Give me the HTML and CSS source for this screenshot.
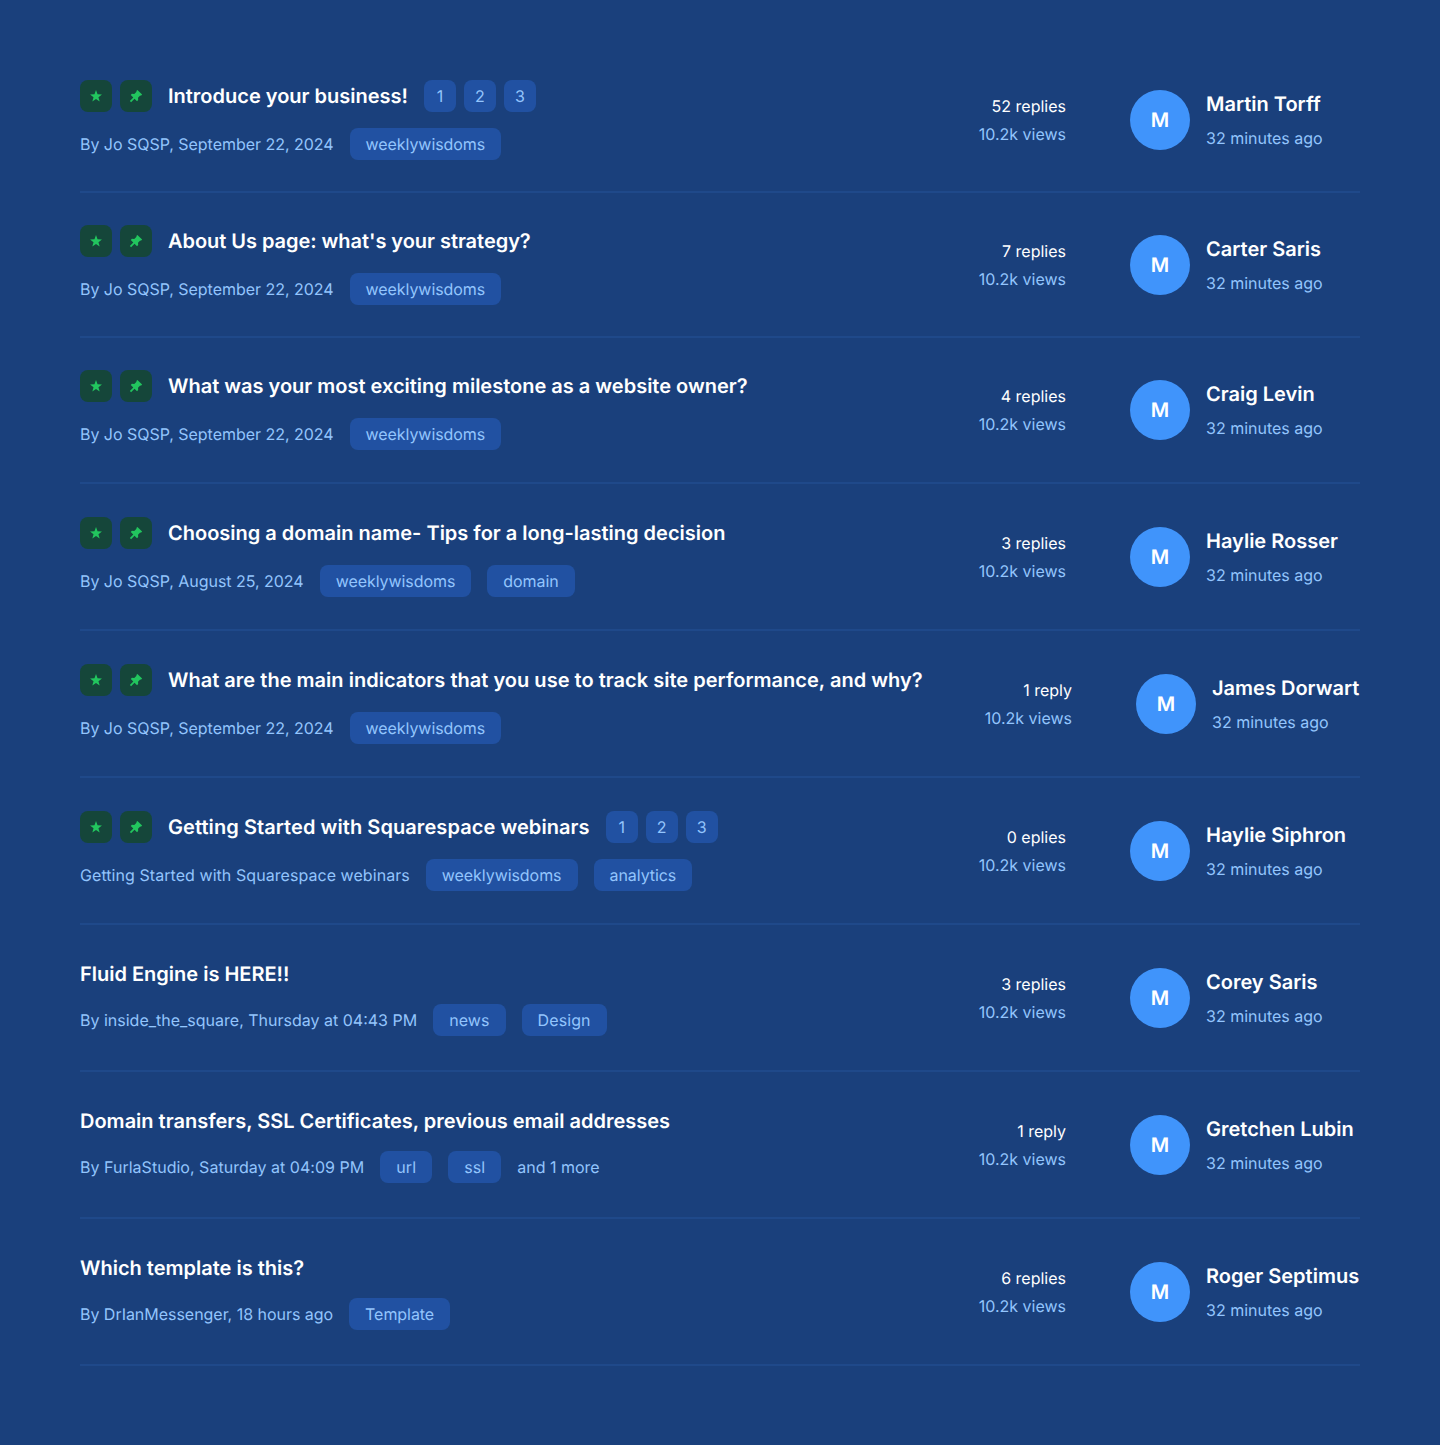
FILE: index.html
```html
<!DOCTYPE html>
<html lang="en">
<head>
<meta charset="utf-8">
<title>Forum topics</title>
<link rel="stylesheet" href="styles.css">
</head>
<body>
<svg class="sprite" aria-hidden="true">
  <symbol id="star" viewBox="0 0 16 16"><path d="M8 1.2l1.75 4.8 5.05.2-4 3.1 1.4 4.9L8 11.4l-4.2 2.8 1.4-4.9-4-3.1 5.05-.2z"/></symbol>
  <symbol id="pin" viewBox="0 0 16 16"><path d="M9.6 1l5.4 5.4-1.4 1.2-.8-.2-2.5 2.6.2 2.7-1.3 1.3-2.9-2.9L2.4 15 1 13.600l3.900-3.900L2 6.800l1.300-1.300 2.700.2 2.600-2.500-.2-.8z"/></symbol>
</svg>
<main class="topics" id="topics"></main>
<script src="topics.js"></script>
</body>
</html>
```
FILE: styles.css
```css
* { box-sizing: border-box; }
body {
  margin: 0;
  min-height: 1445px;
  background: #1a407c;
  color: #fff;
  font: 400 16px/24px Inter, "Liberation Sans", sans-serif;
  text-rendering: geometricPrecision;
}
.sprite { display: none; }
.topics { padding: 49px 80px 79px; }
.topic {
  display: flex;
  align-items: center;
  height: 147px;
  border-bottom: 2px solid #1f498a;
}
.topic:nth-child(1) { height: 144px; }
.topic:nth-child(2) { height: 145px; }
.topic:nth-child(3) { height: 146px; }
.summary { flex: 1; display: flex; flex-direction: column; gap: 16px; white-space: nowrap; }
.heading, .meta, .badges, .pages { display: flex; align-items: center; }
.heading { gap: 16px; }
.title { margin: 0; font-size: 20px; line-height: 28px; font-weight: 600; }
.badges, .pages { gap: 8px; }
.badge {
  width: 32px; height: 32px;
  display: grid; place-items: center;
  border-radius: 8px;
  background: #15463a;
}
.badge svg { width: 14px; height: 14px; fill: #22c55e; }
.meta { height: 32px; gap: 16px; color: #93c5fd; }
.by { letter-spacing: -0.03px; }
.tag, .page {
  height: 32px;
  line-height: 32px;
  border-radius: 8px;
  background: #2151a2;
  color: #93c5fd;
}
.tag { padding: 0 16px; letter-spacing: -0.06px; }
.page { width: 32px; text-align: center; }
.topic:nth-child(2) .title { letter-spacing: -0.04px; }
.topic:nth-child(5) .title { letter-spacing: 0.02px; }
.topic:nth-child(6) .title { letter-spacing: 0.07px; }
.topic:nth-child(6) .by { letter-spacing: 0.06px; }
.topic:nth-child(7) .by { letter-spacing: 0; }
.topic:nth-child(8) .by { letter-spacing: 0.02px; }
.topic:nth-child(7) .tag,
.topic:nth-child(8) .tag { letter-spacing: 0.1px; }
.stats { text-align: right; line-height: 28px; margin-right: 64px; }
.views, .time { color: #93c5fd; }
.user { display: flex; gap: 16px; }
.avatar {
  width: 60px; height: 60px;
  border-radius: 50%;
  background: #4094fb;
  font-size: 20px; line-height: 60px; font-weight: 600;
  text-align: center;
}
.who { width: 154px; display: flex; flex-direction: column; gap: 8px; white-space: nowrap; }
.topic:nth-child(5) .who { width: 148px; }
.name { font-size: 20px; line-height: 28px; font-weight: 600; }
```
FILE: topics.js
```js
const topics = [
  { pinned: true, title: "Introduce your business!", pages: 3, by: "By Jo SQSP, September 22, 2024", tags: ["weeklywisdoms"], replies: "52 replies", user: "Martin Torff" },
  { pinned: true, title: "About Us page: what's your strategy?", by: "By Jo SQSP, September 22, 2024", tags: ["weeklywisdoms"], replies: "7 replies", user: "Carter Saris" },
  { pinned: true, title: "What was your most exciting milestone as a website owner?", by: "By Jo SQSP, September 22, 2024", tags: ["weeklywisdoms"], replies: "4 replies", user: "Craig Levin" },
  { pinned: true, title: "Choosing a domain name- Tips for a long-lasting decision", by: "By Jo SQSP, August 25, 2024", tags: ["weeklywisdoms", "domain"], replies: "3 replies", user: "Haylie Rosser" },
  { pinned: true, title: "What are the main indicators that you use to track site performance, and why?", by: "By Jo SQSP, September 22, 2024", tags: ["weeklywisdoms"], replies: "1 reply", user: "James Dorwart" },
  { pinned: true, title: "Getting Started with Squarespace webinars", pages: 3, by: "Getting Started with Squarespace webinars", tags: ["weeklywisdoms", "analytics"], replies: "0 eplies", user: "Haylie Siphron" },
  { title: "Fluid Engine is HERE!!", by: "By inside_the_square, Thursday at 04:43 PM", tags: ["news", "Design"], replies: "3 replies", user: "Corey Saris" },
  { title: "Domain transfers, SSL Certificates, previous email addresses", by: "By FurlaStudio, Saturday at 04:09 PM", tags: ["url", "ssl"], more: "and 1 more", replies: "1 reply", user: "Gretchen Lubin" },
  { title: "Which template is this?", by: "By DrIanMessenger, 18 hours ago", tags: ["Template"], replies: "6 replies", user: "Roger Septimus" }
];
const icon = id => `<span class="badge"><svg><use href="#${id}"/></svg></span>`;
document.getElementById("topics").innerHTML = topics.map(t => `
  <article class="topic">
    <div class="summary">
      <div class="heading">
        ${t.pinned ? `<div class="badges">${icon("star")}${icon("pin")}</div>` : ""}
        <h2 class="title">${t.title}</h2>
        ${t.pages ? `<div class="pages">${[1, 2, 3].map(n => `<span class="page">${n}</span>`).join("")}</div>` : ""}
      </div>
      <div class="meta">
        <span class="by">${t.by}</span>
        ${t.tags.map(g => `<span class="tag">${g}</span>`).join("")}
        ${t.more ? `<span>${t.more}</span>` : ""}
      </div>
    </div>
    <div class="stats"><div>${t.replies}</div><div class="views">10.2k views</div></div>
    <div class="user">
      <div class="avatar">M</div>
      <div class="who"><div class="name">${t.user}</div><div class="time">32 minutes ago</div></div>
    </div>
  </article>`).join("");
```
